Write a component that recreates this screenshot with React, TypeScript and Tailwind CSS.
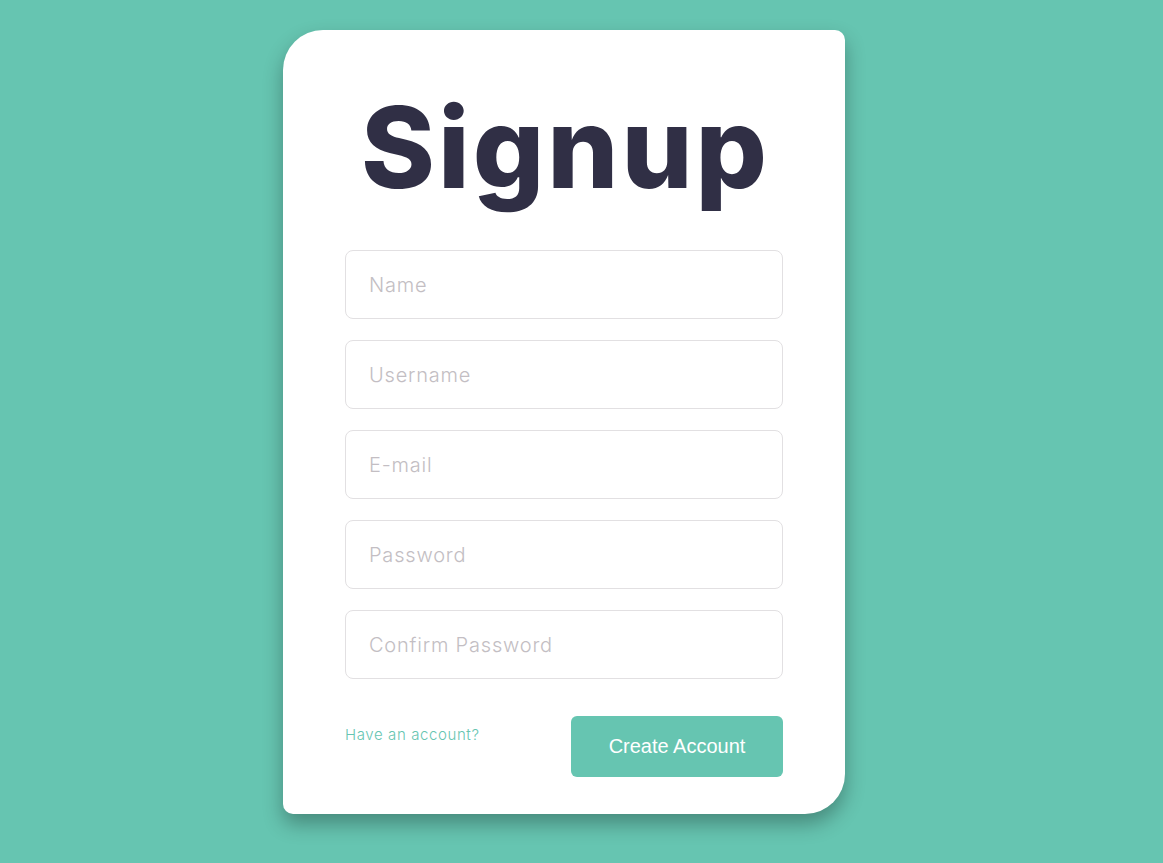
import React from "react";

const fields = ["Name", "Username", "E-mail", "Password", "Confirm Password"];

export default function App() {
  return (
    <div className="min-h-[863px] w-full bg-[#66c5b1] flex justify-center pt-[30px] pr-[35px]">
      <div className="w-[562px] h-[784px] bg-white rounded-tl-[40px] rounded-br-[40px] rounded-tr-[10px] rounded-bl-[10px] shadow-[0_10px_20px_rgba(0,0,0,0.3)] px-[62px] flex flex-col">
        <h1 className="text-[#302f45] text-[112px] leading-none font-extrabold text-center mt-[61px] h-[159px] tracking-[3px] pl-[3px] [font-family:Inter,'Noto_Sans',sans-serif]">
          Signup
        </h1>
        <div className="flex flex-col gap-[21px]">
          {fields.map((f) => (
            <input
              key={f}
              placeholder={f}
              className="h-[69px] w-full border border-[#e2e0e2] rounded-[8px] px-[23px] text-[20px] tracking-[0.8px] placeholder:text-[#c3bec3] outline-none [font-family:Inter,sans-serif] font-light"
            />
          ))}
        </div>
        <div className="flex justify-between mt-[37px]">
          <a className="text-[#66c5b1] text-[15px] tracking-[0.6px] mt-[8px] [font-family:Inter,sans-serif] font-light">
            Have an account?
          </a>
          <button className="w-[212px] h-[61px] bg-[#66c5b1] rounded-[6px] text-white text-[20px] pb-[2px] [font-family:'Liberation_Sans',Arial,sans-serif]">
            Create Account
          </button>
        </div>
      </div>
    </div>
  );
}
